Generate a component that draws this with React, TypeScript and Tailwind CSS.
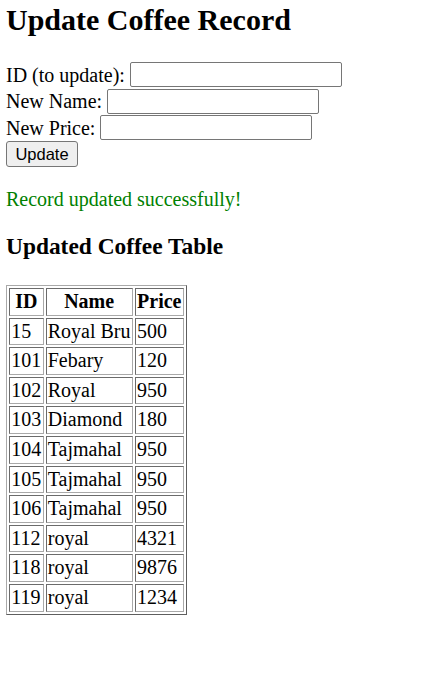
import React from "react";

const rows = [
  { id: 15, name: "Royal Bru", price: 500 },
  { id: 101, name: "Febary", price: 120 },
  { id: 102, name: "Royal", price: 950 },
  { id: 103, name: "Diamond", price: 180 },
  { id: 104, name: "Tajmahal", price: 950 },
  { id: 105, name: "Tajmahal", price: 950 },
  { id: 106, name: "Tajmahal", price: 950 },
  { id: 112, name: "royal", price: 4321 },
  { id: 118, name: "royal", price: 9876 },
  { id: 119, name: "royal", price: 1234 },
];

const inputCls =
  "w-[212px] h-[25px] border border-[#767676] rounded-[2px] bg-white px-[2px] outline-none";

const cellCls =
  "border border-t-[#6b6b6b] border-l-[#6b6b6b] border-b-[#a9a9a9] border-r-[#a9a9a9] px-[1.25px] py-[1px] leading-[23.6px] text-left font-normal";

export default function App() {
  return (
    <div className="min-h-screen bg-white px-[6px] font-['Liberation_Serif',serif] text-[20px] text-black">
      <h1 className="pt-[3px] text-[30px] font-bold leading-[34.5px]">
        Update Coffee Record
      </h1>

      <form className="mt-[24px]" onSubmit={(e) => e.preventDefault()}>
        <div className="flex h-[26.5px] items-center gap-[5px]">
          <label>ID (to update):</label>
          <input type="text" className={inputCls} />
        </div>
        <div className="flex h-[26.5px] items-center gap-[5px]">
          <label>New Name:</label>
          <input type="text" className={inputCls} />
        </div>
        <div className="flex h-[26.5px] items-center gap-[5px]">
          <label>New Price:</label>
          <input type="text" className={inputCls} />
        </div>
        <button
          type="submit"
          className="block h-[26px] w-[72px] rounded-[3px] border border-[#767676] bg-[#efefef] font-['Liberation_Sans',Arial,sans-serif] text-[16.5px] leading-none text-black"
        >
          Update
        </button>
      </form>

      <p className="mt-[21px] leading-[23px] text-[#008000]">
        Record updated successfully!
      </p>

      <h3 className="mt-[22px] text-[23.4px] font-bold leading-[27px]">
        Updated Coffee Table
      </h3>

      <table className="mt-[25px] border-separate border-spacing-x-[2.5px] border-spacing-y-[2.5px] border border-t-[#a9a9a9] border-l-[#a9a9a9] border-b-[#5e5e5e] border-r-[#5e5e5e]">
        <thead>
          <tr>
            <th className={cellCls + " !text-center !font-bold"}>ID</th>
            <th className={cellCls + " !text-center !font-bold"}>Name</th>
            <th className={cellCls + " !text-center !font-bold"}>Price</th>
          </tr>
        </thead>
        <tbody>
          {rows.map((r) => (
            <tr key={r.id}>
              <td className={cellCls}>{r.id}</td>
              <td className={cellCls}>{r.name}</td>
              <td className={cellCls}>{r.price}</td>
            </tr>
          ))}
        </tbody>
      </table>
    </div>
  );
}
